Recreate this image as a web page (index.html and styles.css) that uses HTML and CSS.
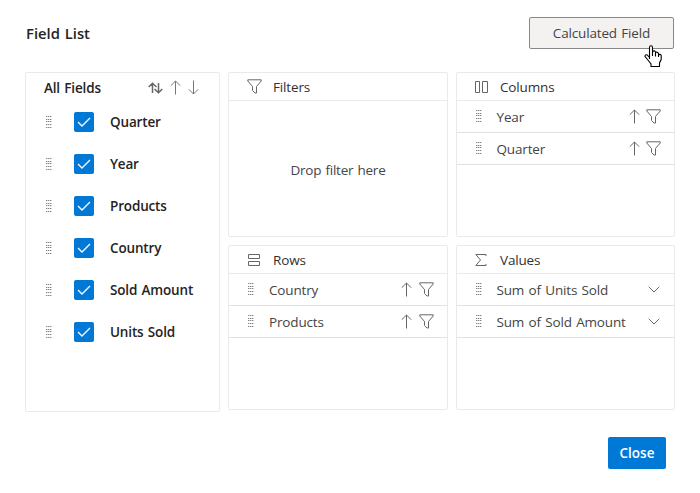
FILE: index.html
```html
<!DOCTYPE html>
<html lang="en">
<head>
<meta charset="utf-8">
<title>Field List</title>
<link rel="stylesheet" href="styles.css">
</head>
<body>
<svg class="defs" width="0" height="0">
  <defs>
    <symbol id="grip" viewBox="0 0 6 13"><path d="M0 .5h1.400M2 .5h1.400M4 .5h1.400M0 3.500h1.400M2 3.500h1.400M4 3.500h1.400M0 5.500h1.400M2 5.500h1.400M4 5.500h1.400M0 8.500h1.400M2 8.500h1.400M4 8.500h1.400M0 11.500h1.400M2 11.500h1.400M4 11.500h1.400" stroke="#777" fill="none"/></symbol>
    <symbol id="up" viewBox="0 0 11 15"><path d="M5.500 14.500V1M.8 5.700L5.500 1l4.700 4.700"/></symbol>
    <symbol id="down" viewBox="0 0 11 15"><path d="M5.500 .5V14M.8 9.300L5.500 14l4.700-4.700"/></symbol>
    <symbol id="sort" viewBox="0 0 15 12"><path d="M4.500 11V1.500M.7 5L4.500 1.300l4 3.700M10.500 1V10.500M14.300 7L10.500 10.700l-4-3.700"/></symbol>
    <symbol id="funnel" viewBox="0 0 15 15"><path d="M.8 .8h13.400v1.200L9.500 7.500v6.500H8L5.500 11.500V7.500L.8 2z"/></symbol>
    <symbol id="columns" viewBox="0 0 13 12"><path d="M.5 .5h4v11h-4zM7.500 .5h5v11h-5z"/></symbol>
    <symbol id="rows" viewBox="0 0 12 12"><path d="M.5 .5h11v4H.5zM.5 7.500h11v4H.5z"/></symbol>
    <symbol id="sigma" viewBox="0 0 12 12"><path d="M11 2V.5H.8L5.500 6 .8 11.500H11V10"/></symbol>
    <symbol id="chevron" viewBox="0 0 12 7"><path d="M.7 .8L6 6l5.300-5.200"/></symbol>
  </defs>
</svg>
<main class="dialog">
  <header class="top">
    <h1>Field List</h1>
    <button class="calc">Calculated Field</button>
    <svg class="cursor" width="18" height="23" viewBox="0 0 18 23"><path d="M5.500 14V2.500Q5.500 .8 7 .8T8.500 2.500V8V6.500Q10.500 5 11.500 7V9V7.500Q13.500 6.500 14.500 8.500V10Q16.500 8.500 17.200 10.500V14.500L15.500 18V21.500H7V19L3.500 14.500 1 11.500Q1 9 3.200 10L5.500 12.500M8.500 7v4M11.500 7.500v4M14.500 9v3" fill="#fff" stroke="#000" stroke-width="1.100"/></svg>
  </header>
  <div class="grid">
    <section class="panel all">
      <div class="all-head"><h2>All Fields</h2>
        <svg class="ic sort" width="15" height="12"><use href="#sort"/></svg>
        <svg class="ic light" width="11" height="15"><use href="#up"/></svg>
        <svg class="ic light" width="11" height="15"><use href="#down"/></svg>
      </div>
      <ul>
        <li><svg class="grip" width="6" height="13"><use href="#grip"/></svg><span class="check"><svg width="14" height="10" viewBox="0 0 14 10"><path d="M1 5l4 4 8-8"/></svg></span><span>Quarter</span></li>
        <li><svg class="grip" width="6" height="13"><use href="#grip"/></svg><span class="check"><svg width="14" height="10" viewBox="0 0 14 10"><path d="M1 5l4 4 8-8"/></svg></span><span>Year</span></li>
        <li><svg class="grip" width="6" height="13"><use href="#grip"/></svg><span class="check"><svg width="14" height="10" viewBox="0 0 14 10"><path d="M1 5l4 4 8-8"/></svg></span><span>Products</span></li>
        <li><svg class="grip" width="6" height="13"><use href="#grip"/></svg><span class="check"><svg width="14" height="10" viewBox="0 0 14 10"><path d="M1 5l4 4 8-8"/></svg></span><span>Country</span></li>
        <li><svg class="grip" width="6" height="13"><use href="#grip"/></svg><span class="check"><svg width="14" height="10" viewBox="0 0 14 10"><path d="M1 5l4 4 8-8"/></svg></span><span>Sold Amount</span></li>
        <li><svg class="grip" width="6" height="13"><use href="#grip"/></svg><span class="check"><svg width="14" height="10" viewBox="0 0 14 10"><path d="M1 5l4 4 8-8"/></svg></span><span>Units Sold</span></li>
      </ul>
    </section>
    <section class="panel">
      <div class="head"><span class="slot"><svg class="ic" width="15" height="15"><use href="#funnel"/></svg></span>Filters</div>
      <div class="drop">Drop filter here</div>
    </section>
    <section class="panel right">
      <div class="head"><span class="slot"><svg class="ic" width="13" height="12"><use href="#columns"/></svg></span>Columns</div>
      <div class="item"><svg class="grip" width="6" height="13"><use href="#grip"/></svg><span class="name">Year</span><svg class="ic" width="11" height="15"><use href="#up"/></svg><svg class="ic fun" width="15" height="15"><use href="#funnel"/></svg></div>
      <div class="item"><svg class="grip" width="6" height="13"><use href="#grip"/></svg><span class="name">Quarter</span><svg class="ic" width="11" height="15"><use href="#up"/></svg><svg class="ic fun" width="15" height="15"><use href="#funnel"/></svg></div>
    </section>
    <section class="panel">
      <div class="head"><span class="slot"><svg class="ic" width="12" height="12"><use href="#rows"/></svg></span>Rows</div>
      <div class="item"><svg class="grip" width="6" height="13"><use href="#grip"/></svg><span class="name">Country</span><svg class="ic" width="11" height="15"><use href="#up"/></svg><svg class="ic fun" width="15" height="15"><use href="#funnel"/></svg></div>
      <div class="item"><svg class="grip" width="6" height="13"><use href="#grip"/></svg><span class="name">Products</span><svg class="ic" width="11" height="15"><use href="#up"/></svg><svg class="ic fun" width="15" height="15"><use href="#funnel"/></svg></div>
    </section>
    <section class="panel right">
      <div class="head"><span class="slot"><svg class="ic" width="12" height="12"><use href="#sigma"/></svg></span>Values</div>
      <div class="item"><svg class="grip" width="6" height="13"><use href="#grip"/></svg><span class="name">Sum of Units Sold</span><svg class="ic chev" width="12" height="7"><use href="#chevron"/></svg></div>
      <div class="item"><svg class="grip" width="6" height="13"><use href="#grip"/></svg><span class="name">Sum of Sold Amount</span><svg class="ic chev" width="12" height="7"><use href="#chevron"/></svg></div>
    </section>
  </div>
  <footer><button class="close">Close</button></footer>
</main>
</body>
</html>
```
FILE: styles.css
```css
* { box-sizing: border-box; }
body { margin: 0; background: #fff; color: #323130; font: 13.5px/20px "Segoe UI", "Open Sans", "Noto Sans", sans-serif; letter-spacing: -.16px; word-spacing: 1px; }
svg { display: block; flex: none; }
.defs { position: absolute; }
h1, h2, ul { margin: 0; padding: 0; font-size: inherit; font-weight: 600; list-style: none; color: #252423; }
button { font: inherit; letter-spacing: inherit; word-spacing: inherit; padding: 0; border-radius: 2px; }
.dialog { width: 700px; height: 493px; padding: 17px 25px 0; }
.top { position: relative; display: flex; justify-content: space-between; align-items: center; height: 32px; margin-bottom: 23px; padding: 0 1px; }
h1 { padding-bottom: 1px; font-size: 14.800px; letter-spacing: 0; }
.calc { width: 145px; height: 32px; background: #f3f2f1; border: 1px solid #8a8886; color: #444; }
.cursor { position: absolute; left: 619px; top: 28px; }
.grid { display: grid; grid-template-columns: 195px 220px 219px; grid-template-rows: 165px 165px; gap: 8px; }
.panel { border: 1px solid #eaeaea; border-radius: 2px; }
.all { grid-row: span 2; height: 340px; }
.all-head { display: flex; align-items: center; height: 28px; padding: 1px 0 0 18px; }
.all-head h2 { width: 104px; padding-top: 1px; }
.all-head svg + svg { margin-left: 7px; }
.ic { fill: none; stroke: #666; stroke-width: 1; }
.sort { stroke-width: 1.500; }
.light { stroke: #777; }
.grip { opacity: .9; }
.all li { display: flex; align-items: center; height: 42px; padding-left: 20px; font-weight: 600; color: #252423; }
.all li > span:last-child { margin-left: 16px; }
.check { display: grid; place-items: center; width: 20px; height: 20px; margin-left: 22px; background: #0078d6; border-radius: 2px; }
.check path { fill: none; stroke: #fff; stroke-width: 1.300; }
.head { display: flex; align-items: center; height: 28px; border-bottom: 1px solid #eaeaea; }
.slot { display: grid; place-items: center; width: 16px; margin: 0 11px 0 17px; }
.right .slot { margin-left: 16px; }
.item { display: flex; align-items: center; height: 32px; padding: 0 13px 0 19px; border-bottom: 1px solid #e1e1e1; color: #444; }
.name { flex: 1; margin-left: 15px; }
.right .name { margin-left: 14.500px; }
.fun { margin-left: 7px; }
.right .fun { margin-left: 6px; }
.chev { margin-right: 1px; }
.drop { display: grid; place-items: center; height: 138px; color: #444; padding-bottom: 1px; letter-spacing: -.25px; }
footer { display: flex; justify-content: flex-end; padding: 27px 9px 0 0; }
.close { width: 58px; height: 32px; border: 0; background: #0078d6; color: #fff; font-weight: 600; letter-spacing: 0; }
```
